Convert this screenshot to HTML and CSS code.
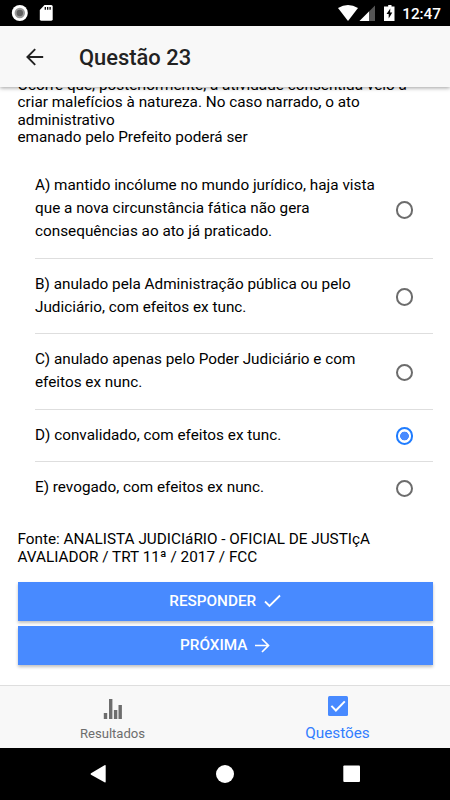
FILE: index.html
```html
<!DOCTYPE html>
<html lang="pt-BR">
<head>
<meta charset="utf-8">
<title>Questão 23</title>
<link rel="stylesheet" href="styles.css">
</head>
<body>
<div class="status">
  <svg width="60" height="26" viewBox="0 0 60 26"><circle cx="19.8" cy="13" r="8" fill="#fff"/><circle cx="19.8" cy="13" r="4.2" fill="#606060" stroke="#999" stroke-width="2"/><path d="M44.5 5H51.3Q52.7 5 52.7 6.500V19.300Q52.700 20.700 51.300 20.700H41.200Q39.800 20.700 39.800 19.300V10Z" fill="#fff"/><path d="M45.300 7V9.800M47.700 7V9.800M50.100 7V9.800" stroke="#000" stroke-width="1.300"/></svg>
  <div class="status-right">
    <svg width="60" height="26" viewBox="0 0 60 26"><path d="M0 8Q10 2 20 8L10 21Z" fill="#fff"/><path d="M37 5.500V21H21.500Z" fill="#555"/><path d="M31 11.500V21H21.500Z" fill="#fff"/><path d="M48 6.500H50.200V5H53.500V6.500H56.500V21H46V6.500Z" fill="#fff"/><path d="M52.300 8.500L48.500 14H50.700V18.500L54.300 12.500H52.100Z" fill="#000"/></svg>
    <span class="clock">12:47</span>
  </div>
</div>
<header class="header">
  <svg class="back" width="18" height="18" viewBox="0 0 18 18"><path d="M17.200 9H1.800M9.200 1.200L1.400 9L9.200 16.800" fill="none" stroke="#222" stroke-width="1.900"/></svg>
  <h1>Questão 23</h1>
</header>
<main class="content">
  <p class="statement">Ocorre que, posteriormente, a atividade consentida veio a<br>criar malefícios à natureza. No caso narrado, o ato<br>administrativo<br>emanado pelo Prefeito poderá ser</p>
  <div class="options">
    <label class="option"><span>A) mantido incólume no mundo jurídico, haja vista<br>que a nova circunstância fática não gera<br>consequências ao ato já praticado.</span><i class="radio"></i></label>
    <label class="option"><span>B) anulado pela Administração pública ou pelo<br>Judiciário, com efeitos ex tunc.</span><i class="radio"></i></label>
    <label class="option"><span>C) anulado apenas pelo Poder Judiciário e com<br>efeitos ex nunc.</span><i class="radio"></i></label>
    <label class="option"><span>D) convalidado, com efeitos ex tunc.</span><i class="radio checked"></i></label>
    <label class="option"><span>E) revogado, com efeitos ex nunc.</span><i class="radio"></i></label>
  </div>
  <p class="source">Fonte: ANALISTA JUDICIáRIO - OFICIAL DE JUSTIçA<br>AVALIADOR / TRT 11ª / 2017 / FCC</p>
  <div class="button">RESPONDER<svg width="17" height="14" viewBox="0 0 17 14"><path d="M1 7.500L5.500 12L16 1.500" fill="none" stroke="#fff" stroke-width="1.800"/></svg></div>
  <div class="button">PRÓXIMA<svg width="15" height="15" viewBox="0 0 15 15"><path d="M0 7.500H13.500M7 1L13.500 7.500L7 14" fill="none" stroke="#fff" stroke-width="1.700"/></svg></div>
</main>
<nav class="tabs">
  <div class="tab">
    <svg width="20" height="22" viewBox="0 0 20 22"><path d="M.8 15H4.200V21H.8ZM6 1H9.400V21H6ZM10.900 12H14.300V21H10.900ZM15.500 7H18.900V21H15.500Z" fill="#6d6d6d"/></svg>
    <span>Resultados</span>
  </div>
  <div class="tab active">
    <svg width="20" height="20" viewBox="0 0 20 20"><rect width="20" height="20" rx="1.500" fill="#488aff"/><path d="M3.400 9.900L7.900 14.500L16.800 5.400" fill="none" stroke="#fff" stroke-width="2"/></svg>
    <span>Questões</span>
  </div>
</nav>
<footer class="system">
  <svg width="450" height="52" viewBox="0 0 450 52"><path d="M91 25.200L104.500 17.300Q105.700 16.700 105.700 18V33.500Q105.700 34.800 104.500 34.200L91 26.700Q90 26 91 25.200Z" fill="#fff"/><circle cx="225" cy="26" r="9" fill="#fff"/><rect x="343.300" y="17.500" width="16.700" height="16.500" rx="1" fill="#fff"/></svg>
</footer>
</body>
</html>
```
FILE: styles.css
```css
* { box-sizing: border-box; }
body {
  margin: 0;
  width: 450px;
  height: 800px;
  overflow: hidden;
  display: flex;
  flex-direction: column;
  background: #fff;
  color: #000;
  font-family: Roboto, "Liberation Sans", sans-serif;
  font-size: 15.3px;
}
svg { display: block; flex: none; }
p, h1 { margin: 0; }
.status {
  flex: none;
  height: 26px;
  display: flex;
  justify-content: space-between;
  background: #000;
  color: #fff;
}
.status-right { display: flex; padding-right: 9px; }
.clock {
  width: 43px;
  text-align: right;
  font-size: 15.3px;
  font-weight: 500;
  line-height: 28px;
}
.header {
  flex: none;
  height: 61px;
  display: flex;
  align-items: center;
  padding-left: 26px;
  background: #f8f8f8;
  box-shadow: 0 1px 4px rgba(0, 0, 0, .38);
  z-index: 1;
}
.header h1 {
  margin-left: 35px;
  padding-top: 2px;
  color: #222;
  font-size: 21.9px;
  font-weight: 500;
  line-height: 26px;
}
.content {
  flex: 1;
  min-height: 0;
  overflow: hidden;
  padding: 0 17px 0 17.5px;
  white-space: nowrap;
}
.statement {
  margin-top: -10.500px;
  line-height: 17.500px;
}
.options { padding: 14.200px 0 0 17.500px; }
.option {
  display: flex;
  align-items: center;
  justify-content: space-between;
  padding: 13.800px 20px 14.600px 0;
  border-bottom: 1px solid #dedede;
  line-height: 23px;
}
.option:last-child { border-bottom-color: transparent; }
.radio {
  position: relative;
  top: 1px;
  width: 17.500px;
  height: 17.500px;
  border: 2px solid #6c6c6c;
  border-radius: 50%;
}
.radio.checked {
  border-color: #1f7cff;
  background: radial-gradient(circle, #488aff 4.100px, #fff 4.700px);
}
.source {
  margin: 16.600px 0 15.400px;
  line-height: 17.500px;
}
.button {
  height: 39px;
  margin-bottom: 5px;
  display: flex;
  align-items: center;
  justify-content: center;
  gap: 8px;
  background: #488aff;
  color: #fff;
  font-weight: 500;
  box-shadow: 0 2px 3px rgba(0, 0, 0, .25);
}
.tabs {
  flex: none;
  height: 63px;
  display: flex;
  border-top: 1px solid #dedede;
  background: #f8f8f8;
}
.tab {
  flex: 1;
  display: flex;
  flex-direction: column;
  align-items: center;
  padding-top: 12px;
  color: #6d6d6d;
  font-size: 13.100px;
  line-height: 16px;
}
.tab span { margin-top: 6px; }
.active {
  padding-top: 10px;
  color: #327eff;
  font-size: 15.300px;
}
.active span { margin-top: 9px; }
.system { flex: none; height: 52px; background: #000; }
```
